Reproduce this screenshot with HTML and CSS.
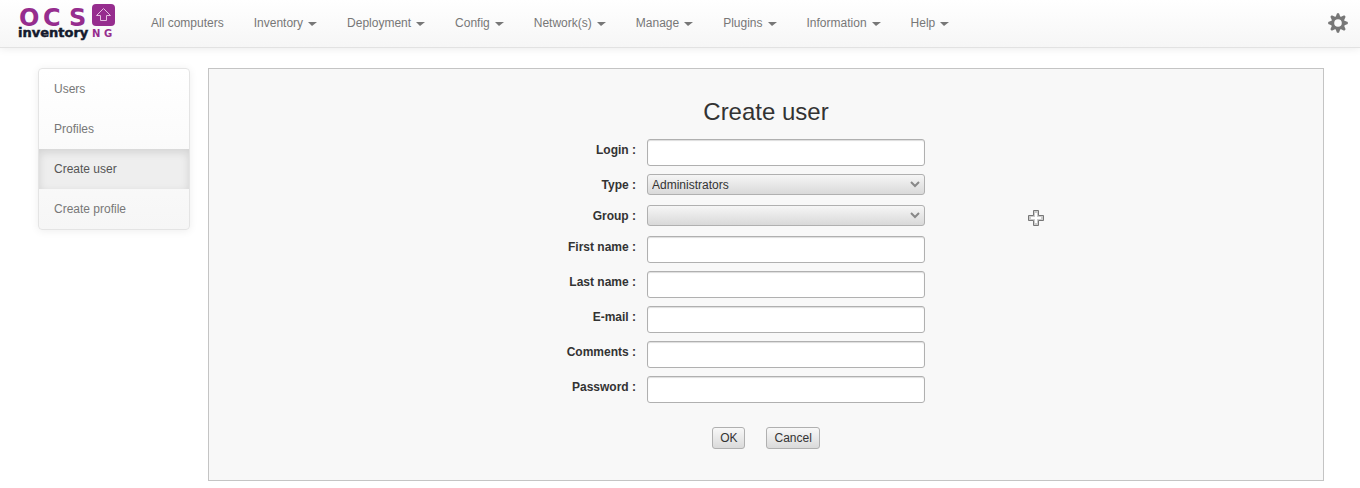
FILE: index.html
```html
<!DOCTYPE html>
<html lang="en">
<head>
<meta charset="utf-8">
<title>OCS Inventory NG - Create user</title>
<link rel="stylesheet" href="styles.css">
</head>
<body>
<header class="topbar">
  <a class="brand" href="#" aria-label="OCS Inventory NG">
    <svg class="logo" width="100" height="44" viewBox="0 0 100 44">
      <text class="logo-ocs" x="1 25 51" y="26">OCS</text>
      <rect x="74" y="4" width="23" height="22" rx="4" fill="#962d8e"/>
      <path d="M85.500 8.500L92.500 15.500H88.500V20.500H82.500V15.500H78.500Z" fill="none" stroke="#e3bfe0" stroke-width="1"/>
      <text class="logo-name" x="0" y="37">inventory</text>
      <text class="logo-ng" x="74 86" y="37">NG</text>
    </svg>
  </a>
  <nav class="menu">
    <a href="#">All computers</a>
    <a class="drop" href="#">Inventory</a>
    <a class="drop" href="#">Deployment</a>
    <a class="drop" href="#">Config</a>
    <a class="drop" href="#">Network(s)</a>
    <a class="drop" href="#">Manage</a>
    <a class="drop" href="#">Plugins</a>
    <a class="drop" href="#">Information</a>
    <a class="drop" href="#">Help</a>
  </nav>
  <button class="settings" type="button" aria-label="Settings">
    <svg width="20" height="20" viewBox="-10 -10 20 20">
      <g fill="#777">
        <path id="tooth" d="M-2.400-6L-1-9.800H1L2.400-6V6L1 9.800H-1L-2.400 6Z"/>
        <use href="#tooth" transform="rotate(45)"/>
        <use href="#tooth" transform="rotate(90)"/>
        <use href="#tooth" transform="rotate(135)"/>
        <circle r="6.800"/>
      </g>
      <circle r="3.800" fill="#fafafa"/>
    </svg>
  </button>
</header>
<div class="page">
  <nav class="side">
    <a href="#">Users</a>
    <a href="#">Profiles</a>
    <a class="active" href="#">Create user</a>
    <a href="#">Create profile</a>
  </nav>
  <main class="panel">
    <h1>Create user</h1>
    <form>
      <div class="row"><label for="login">Login :</label><input id="login" type="text"></div>
      <div class="row pick"><label for="type">Type :</label><select id="type"><option>Administrators</option></select></div>
      <div class="row pick"><label for="group">Group :</label><select id="group"><option></option></select></div>
      <div class="row"><label for="first">First name :</label><input id="first" type="text"></div>
      <div class="row"><label for="last">Last name :</label><input id="last" type="text"></div>
      <div class="row"><label for="email">E-mail :</label><input id="email" type="text"></div>
      <div class="row"><label for="comments">Comments :</label><input id="comments" type="text"></div>
      <div class="row"><label for="password">Password :</label><input id="password" type="password"></div>
      <div class="actions"><button type="button">OK</button><button type="button">Cancel</button></div>
    </form>
  </main>
</div>
<svg class="pointer" width="16" height="16" viewBox="0 0 16 16">
  <path d="M5.500.500h5v5h5v5h-5v5h-5v-5h-5v-5h5z" fill="#ccc" stroke="#777"/>
  <path d="M7 3h2v4h4v2H9v4H7V9H3V7h4z" fill="#fff"/>
</svg>
</body>
</html>
```
FILE: styles.css
```css
* { box-sizing: border-box; }
body {
  margin: 0;
  background: #fff;
  color: #333;
  font: 12px/20px "Liberation Sans", Arial, sans-serif;
}
a { text-decoration: none; }
.topbar {
  display: flex;
  align-items: flex-start;
  height: 48px;
  padding: 0 12px 0 18px;
  background: linear-gradient(#fff, #f6f6f6);
  border-bottom: 1px solid #e2e2e2;
  box-shadow: 0 1px 8px rgba(0, 0, 0, .08);
}
.brand { width: 118px; }
.logo { display: block; }
.logo-ocs {
  fill: #962d8e;
  font: bold 24px "DejaVu Sans", sans-serif;
}
.logo-name {
  fill: #151a2d;
  stroke: #151a2d;
  stroke-width: .5px;
  font: bold 13px "DejaVu Sans", sans-serif;
}
.logo-ng {
  fill: #962d8e;
  font: bold 10px "DejaVu Sans", sans-serif;
}
.menu { display: flex; flex: 1; }
.menu a { padding: 13px 15px; color: #777; white-space: nowrap; }
.drop::after {
  content: "";
  display: inline-block;
  margin-left: 5px;
  vertical-align: middle;
  border: 4px solid transparent;
  border-top-color: #777;
  border-bottom: 0;
  border-left-width: 4px;
  border-right-width: 5px;
}
.settings {
  display: flex;
  padding: 13px 0;
  border: 0;
  background: none;
}
.page {
  display: flex;
  align-items: flex-start;
  gap: 18px;
  padding: 20px 36px 7px 38px;
}
.side {
  flex: 0 0 152px;
  border: 1px solid #e4e4e4;
  border-radius: 4px;
  background: linear-gradient(#fff, #f6f6f6);
  box-shadow: 0 1px 8px rgba(0, 0, 0, .07);
}
.side a { display: block; padding: 10px 15px; color: #777; }
.side .active {
  color: #555;
  background: #eee;
  box-shadow: inset 0 3px 8px rgba(0, 0, 0, .12);
}
.panel {
  flex: 1;
  padding: 23px 20px 31px;
  border: 1px solid #c4c4c4;
  background: #f8f8f8;
}
h1 {
  margin: 0 0 7px;
  font-size: 24px;
  font-weight: normal;
  line-height: 40px;
  text-align: center;
}
form { width: 400px; margin: 0 auto; }
.row {
  display: grid;
  grid-template-columns: 70px 278px;
  column-gap: 11px;
  height: 35px;
}
.row label {
  justify-self: end;
  padding-top: 1px;
  font-weight: bold;
  white-space: nowrap;
}
.row input {
  width: 100%;
  height: 27px;
  padding: 4px;
  border: 1px solid #b0b0b0;
  border-radius: 3px;
  background: #fff;
  box-shadow: inset 0 1px 1px #ddd;
  font: inherit;
}
.pick { height: 31px; }
.pick select {
  appearance: none;
  height: 21px;
  padding: 0 4px;
  border: 1px solid #b0b0b0;
  border-radius: 3px;
  background: url("data:image/svg+xml,%3Csvg xmlns='http://www.w3.org/2000/svg' width='10' height='7'%3E%3Cpath d='M1 1l4 4 4-4' fill='none' stroke='%23888' stroke-width='2'/%3E%3C/svg%3E") no-repeat right 4px center, linear-gradient(#f6f6f6, #d9d9d9);
  color: #333;
  font: inherit;
}
.actions {
  display: flex;
  justify-content: center;
  gap: 21px;
  padding-top: 16px;
}
.actions button {
  height: 22px;
  padding: 0 7px;
  border: 1px solid #b0b0b0;
  border-radius: 3px;
  background: linear-gradient(#f8f8f8, #dadada);
  color: #333;
  font: inherit;
}
.pointer { position: absolute; left: 1028px; top: 210px; }
```
